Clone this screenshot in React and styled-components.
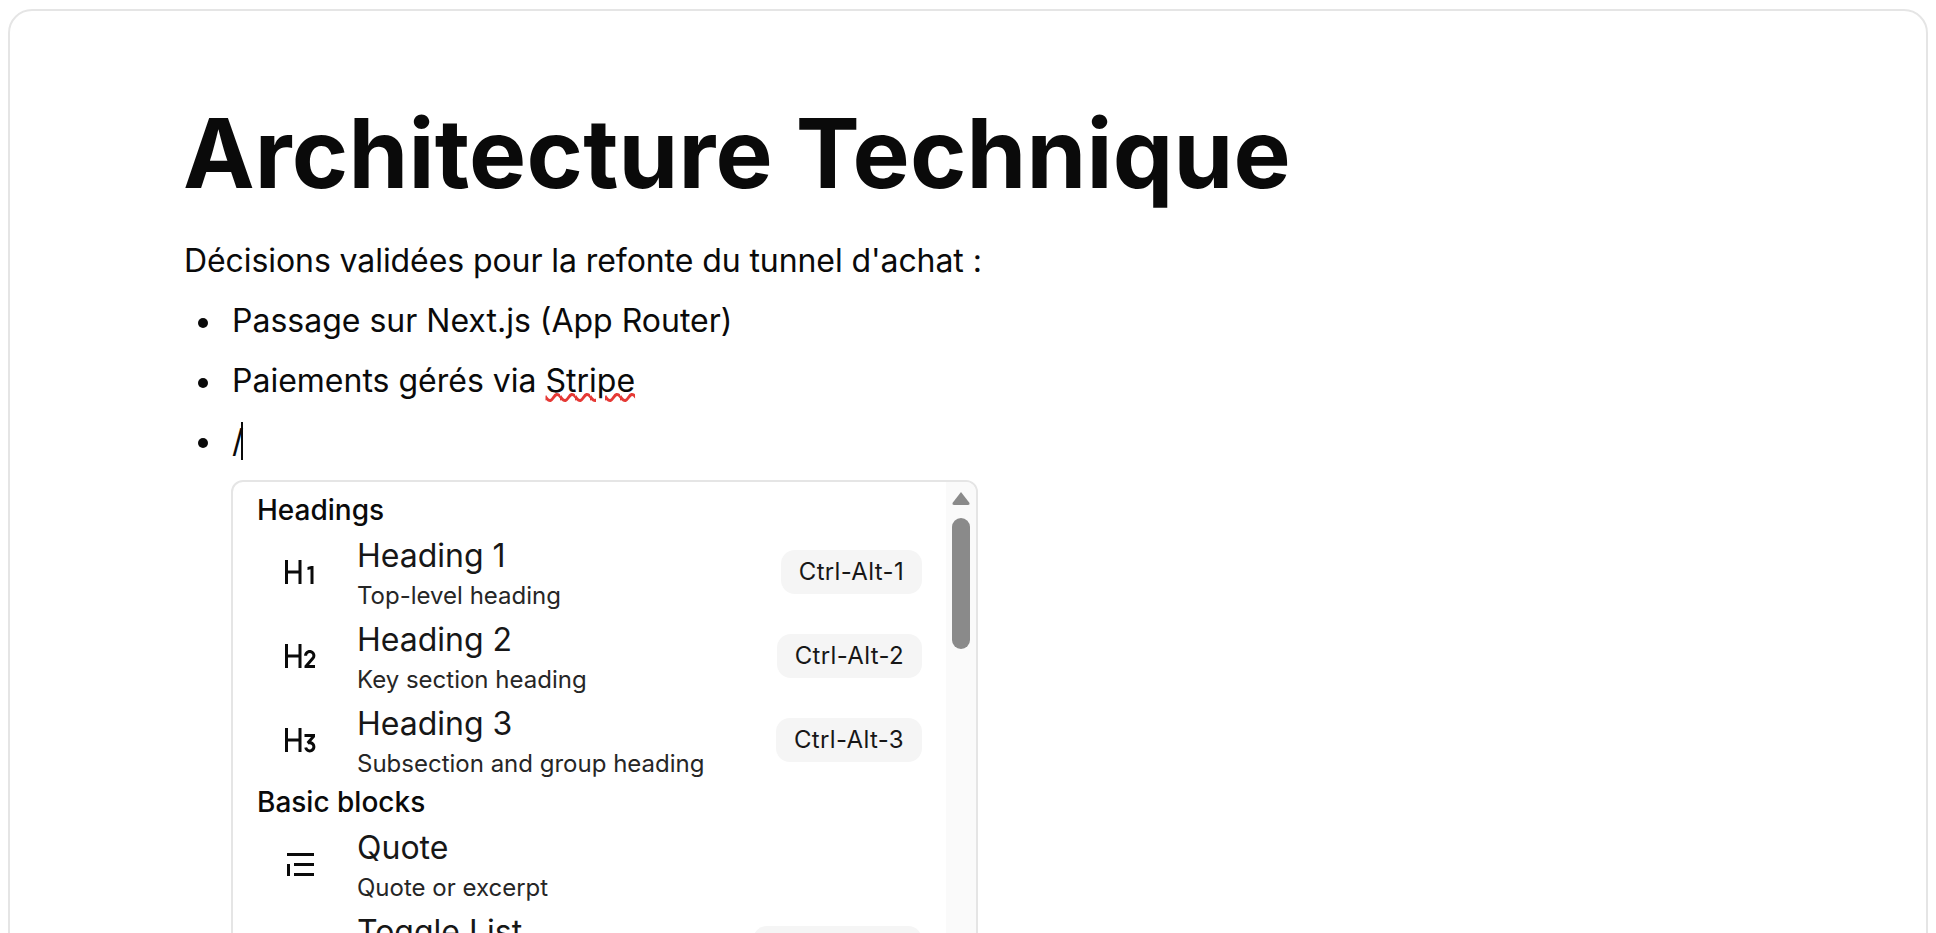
import React from 'react';
import styled, { createGlobalStyle } from 'styled-components';
import { RiH1, RiH2, RiH3 } from 'react-icons/ri';

const GlobalStyle = createGlobalStyle`
  html, body {
    margin: 0;
    height: 100%;
    overflow: hidden;
    background: #fff;
  }
  body {
    font-family: Inter, "Liberation Sans", sans-serif;
    color: #0a0a0a;
  }
`;

const Page = styled.div`
  height: 933px;
  box-sizing: border-box;
  padding: 9px 8px 0;
  overflow: hidden;
`;

const Card = styled.main`
  box-sizing: border-box;
  height: 1400px;
  border: 2px solid #e5e5e5;
  border-radius: 24px;
  padding: 82px 174px 0;
`;

const Title = styled.h1`
  margin: 0 0 18px -1px;
  font-size: 96px;
  line-height: 120px;
  font-weight: 700;
  letter-spacing: 0.2px;
  color: #0a0a0a;
`;

const Paragraph = styled.p`
  margin: 0;
  font-size: 32px;
  line-height: 60px;
  letter-spacing: -0.08px;
`;

const Bullets = styled.ul`
  margin: 0;
  padding: 0 0 0 48px;
  list-style: none;
  font-size: 32px;
  line-height: 60px;
`;

const Bullet = styled.li`
  position: relative;

  &::before {
    content: '';
    position: absolute;
    left: -34px;
    top: 27px;
    width: 10px;
    height: 10px;
    border-radius: 50%;
    background: #0a0a0a;
  }
`;

const Misspelled = styled.span`
  text-decoration: underline wavy #e53935 2.5px;
  text-underline-offset: 1px;
`;

const Caret = styled.span`
  display: inline-block;
  width: 2px;
  height: 38px;
  margin-left: -3px;
  vertical-align: -8px;
  background: #0a0a0a;
`;

const Menu = styled.div`
  display: flex;
  box-sizing: border-box;
  width: 747px;
  height: 560px;
  margin: 9px 0 0 47px;
  border: 2px solid #e5e5e5;
  border-radius: 12px;
  overflow: hidden;
`;

const MenuList = styled.div`
  flex: 1;
  min-width: 0;
  padding: 8px 24px 0 24px;
`;

const GroupLabel = styled.div`
  font-size: 28px;
  line-height: 40px;
  font-weight: 500;
`;

const Row = styled.div`
  display: flex;
  align-items: center;
  height: 84px;
`;

const IconCell = styled.div`
  flex: none;
  display: flex;
  justify-content: center;
  width: 85px;
  margin-right: 15px;
  font-size: 36px;
  color: #0a0a0a;
`;

const RowText = styled.div`
  flex: 1;
  min-width: 0;
  margin-top: 5px;
`;

const RowTitle = styled.div`
  font-size: 32px;
  line-height: 42px;
  color: #171717;
`;

const RowDesc = styled.div`
  font-size: 24px;
  line-height: 38px;
  color: #262626;
`;

const Shortcut = styled.span`
  flex: none;
  padding: 0 18px;
  height: 44px;
  border-radius: 14px;
  background: #f5f5f5;
  font-size: 24px;
  letter-spacing: 0.35px;
  line-height: 44px;
  color: #171717;
`;

const Scrollbar = styled.div`
  flex: none;
  display: flex;
  flex-direction: column;
  align-items: center;
  width: 30px;
  padding-top: 9px;
  box-sizing: border-box;
  background: #fafafa;
`;

const ScrollArrow = styled.svg`
  display: block;
  width: 18px;
  height: 14px;
  fill: #8a8a8a;
`;

const ScrollThumb = styled.div`
  width: 18px;
  height: 131px;
  margin-top: 13px;
  border-radius: 9px;
  background: #8a8a8a;
`;

const QuoteIcon = () => (
  <svg width="36" height="36" viewBox="0 0 36 36" fill="#0a0a0a">
    <rect x="5" y="7" width="27" height="3" />
    <rect x="12" y="17" width="20" height="3" />
    <rect x="12" y="27" width="20" height="3" />
    <rect x="5" y="18" width="3" height="12" />
  </svg>
);

const groups = [
  {
    label: 'Headings',
    items: [
      { icon: <RiH1 />, title: 'Heading 1', desc: 'Top-level heading', keys: 'Ctrl-Alt-1' },
      { icon: <RiH2 />, title: 'Heading 2', desc: 'Key section heading', keys: 'Ctrl-Alt-2' },
      { icon: <RiH3 />, title: 'Heading 3', desc: 'Subsection and group heading', keys: 'Ctrl-Alt-3' },
    ],
  },
  {
    label: 'Basic blocks',
    items: [
      { icon: <QuoteIcon />, title: 'Quote', desc: 'Quote or excerpt' },
      { icon: null, title: 'Toggle List', desc: 'List with hideable sub-items', keys: 'Ctrl-Shift-9' },
    ],
  },
];

export default function App() {
  return (
    <Page>
      <GlobalStyle />
      <Card>
        <Title>Architecture Technique</Title>
        <Paragraph>Décisions validées pour la refonte du tunnel d'achat :</Paragraph>
        <Bullets>
          <Bullet>Passage sur Next.js (App Router)</Bullet>
          <Bullet>Paiements gérés via <Misspelled>Stripe</Misspelled></Bullet>
          <Bullet>/<Caret /></Bullet>
        </Bullets>
        <Menu>
          <MenuList>
            {groups.map(group => (
              <div key={group.label}>
                <GroupLabel>{group.label}</GroupLabel>
                {group.items.map(item => (
                  <Row key={item.title}>
                    <IconCell>{item.icon}</IconCell>
                    <RowText>
                      <RowTitle>{item.title}</RowTitle>
                      <RowDesc>{item.desc}</RowDesc>
                    </RowText>
                    {item.keys && <Shortcut>{item.keys}</Shortcut>}
                  </Row>
                ))}
              </div>
            ))}
          </MenuList>
          <Scrollbar>
            <ScrollArrow viewBox="0 0 18 14">
              <path d="M9 1 L17.5 12 Q18 14 16 14 L2 14 Q0 14 .5 12 Z" />
            </ScrollArrow>
            <ScrollThumb />
          </Scrollbar>
        </Menu>
      </Card>
    </Page>
  );
}
